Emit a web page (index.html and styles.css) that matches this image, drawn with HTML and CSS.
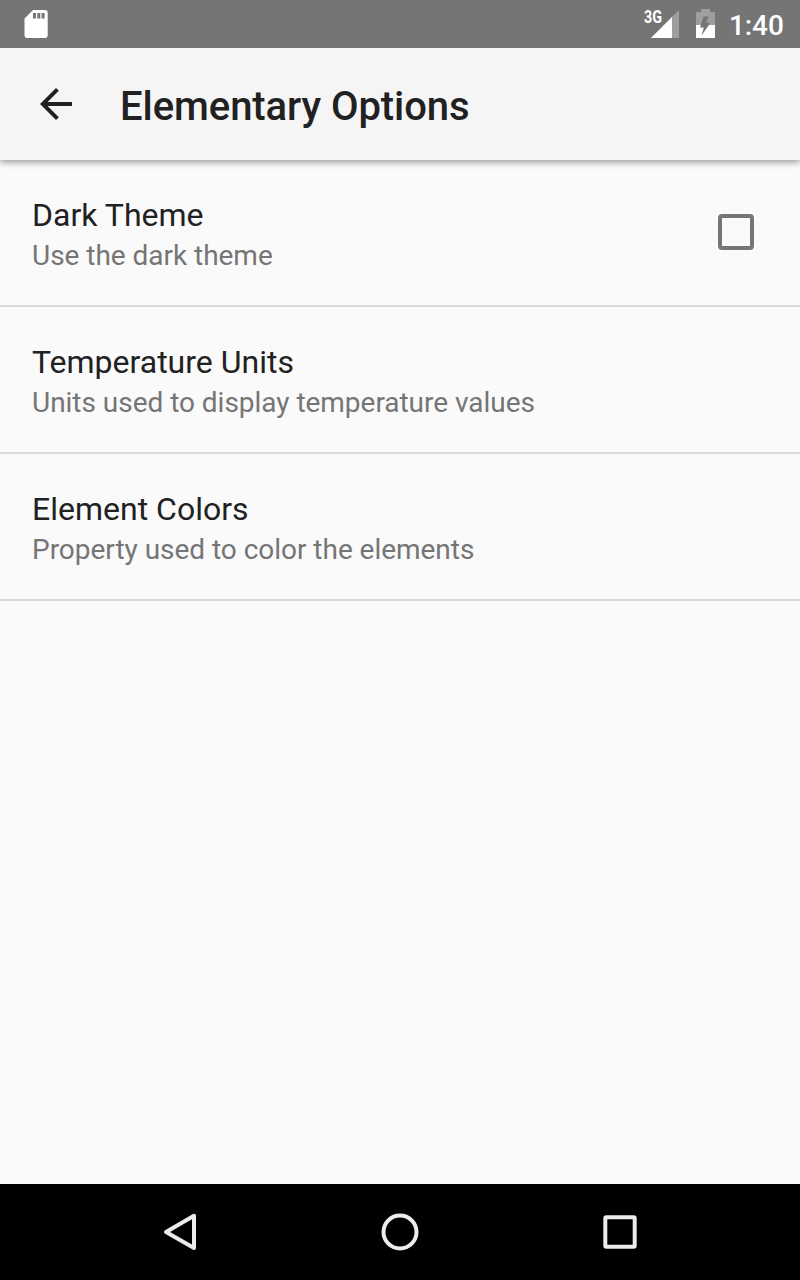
FILE: index.html
```html
<!DOCTYPE html>
<html lang="en">
<head>
<meta charset="utf-8">
<title>Elementary Options</title>
<link rel="stylesheet" href="styles.css">
</head>
<body>
<div class="screen">
  <header class="status">
    <svg class="sd" width="24" height="30" viewBox="0 0 24 30"><path fill="#fff" fill-rule="evenodd" d="M9 1H21Q23.7 1 23.7 3.700V26Q23.700 29 21 29H3Q.5 29 .5 26V9.500ZM9 4V9.500H12V4ZM13.300 4V9.500H16.300V4ZM17.600 4V9.500H20.600V4Z"/></svg>
    <div class="status-right">
      <svg class="signal" width="36" height="30" viewBox="0 0 36 30"><path fill="#fff" fill-opacity=".3" d="M35 1V29H7Z"/><path fill="#fff" d="M28 8V29H7Z"/><text class="net" x="0" y="14" textLength="18" lengthAdjust="spacingAndGlyphs">3G</text></svg>
      <svg class="battery" width="20" height="30" viewBox="0 0 20 30"><path fill="#fff" fill-opacity=".3" d="M5 0H14V3H19V16H0V3H5Z"/><path fill="#fff" d="M0 16H19V29H0Z"/><path fill="#757575" d="M7.500 7.500H12.500L10 13.700H14.500L5.500 26.500L7.800 18.500H4Z"/></svg>
      <span class="clock">1:40</span>
    </div>
  </header>
  <div class="appbar">
    <svg class="back" width="32" height="32" viewBox="4 4 16 16"><path fill="#212121" d="M20 11H7.83l5.59-5.59L12 4l-8 8 8 8 1.41-1.41L7.83 13H20v-2z"/></svg>
    <h1 class="title">Elementary Options</h1>
  </div>
  <main class="list">
    <div class="row"><div class="label"><div class="name">Dark Theme</div><div class="desc">Use the dark theme</div></div><span class="checkbox"></span></div>
    <div class="row"><div class="label"><div class="name">Temperature Units</div><div class="desc">Units used to display temperature values</div></div></div>
    <div class="row"><div class="label"><div class="name">Element Colors</div><div class="desc">Property used to color the elements</div></div></div>
  </main>
  <nav class="nav">
    <svg width="40" height="40" viewBox="0 0 40 40"><path d="M34 3.800V36L6 20Z"/></svg>
    <svg width="40" height="40" viewBox="0 0 40 40"><circle cx="20" cy="20" r="16.500"/></svg>
    <svg width="40" height="40" viewBox="0 0 40 40"><rect x="5.300" y="5.300" width="29.400" height="29.400" rx="1"/></svg>
  </nav>
</div>
</body>
</html>
```
FILE: styles.css
```css
* { box-sizing: border-box; }
body { margin: 0; font-family: Roboto, sans-serif; }
.screen { width: 800px; height: 1280px; display: flex; flex-direction: column; background: #fafafa; overflow: hidden; }
.status { z-index: 1; height: 48px; flex: none; background: #757575; display: flex; justify-content: space-between; padding: 9px 16px 0 24px; }
.status-right { display: flex; }
.signal { overflow: visible; margin-right: 16px; }
.battery { margin-right: 13px; }
.net { font-size: 17.5px; font-weight: 700; fill: #fff; }
.clock { font-size: 28px; line-height: 34px; font-weight: 500; color: #fff; width: 55px; white-space: nowrap; letter-spacing: -0.1px; }
.appbar { height: 112px; flex: none; background: #f5f5f5; display: flex; align-items: center; padding-left: 40px; gap: 48px; box-shadow: 0 2px 7px rgba(0,0,0,.42); }
.title { margin: 6px 0 0; font-size: 40px; line-height: 48px; font-weight: 500; color: #212121; white-space: nowrap; letter-spacing: -0.07px; }
.list { flex: 1; }
.row { height: 147px; display: flex; align-items: flex-start; justify-content: space-between; padding: 34px 46px 0 32px; border-bottom: 2px solid #dadada; }
.name { font-size: 32px; line-height: 42px; color: #212121; }
.desc { font-size: 28px; line-height: 39px; color: #757575; letter-spacing: -0.03px; }
.checkbox { width: 36px; height: 36px; margin-top: 20px; border: 4px solid #757575; border-radius: 4px; }
.nav { height: 96px; flex: none; background: #000; display: flex; align-items: center; justify-content: center; gap: 180px; }
.nav svg { fill: none; stroke: #ececec; stroke-width: 4; stroke-linejoin: round; }
```
